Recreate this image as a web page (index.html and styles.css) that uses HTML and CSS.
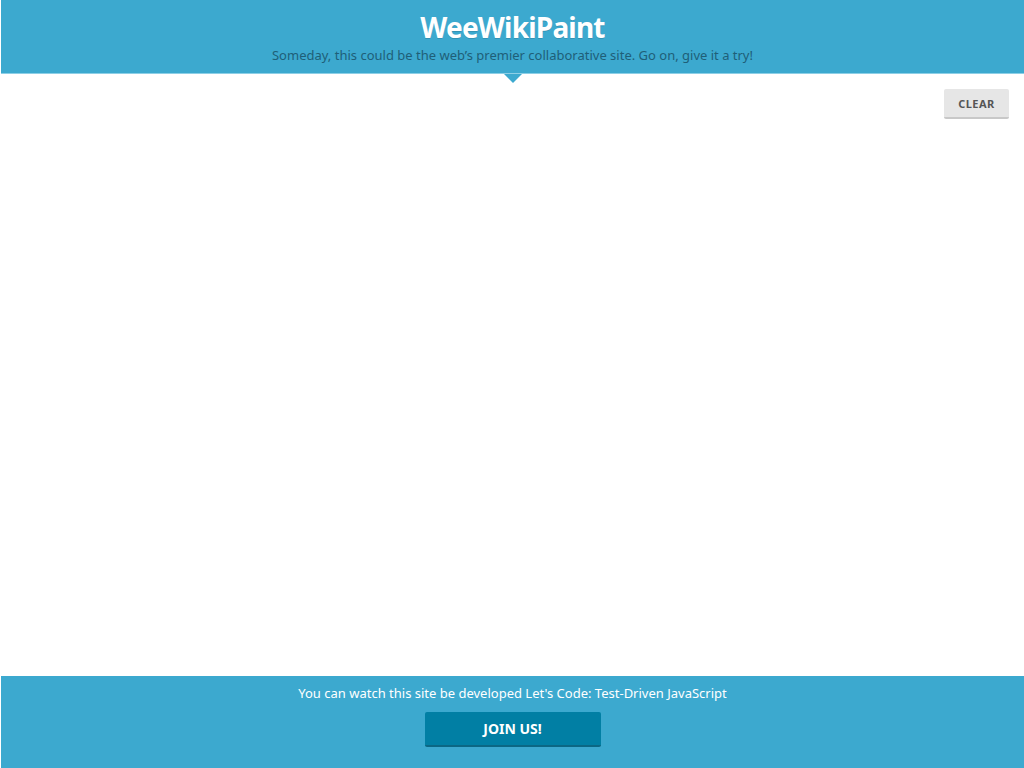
FILE: index.html
```html
<!DOCTYPE html>
<html>
<head>
<meta charset="utf-8">
<title>WeeWikiPaint</title>
<link rel="stylesheet" href="styles.css">
</head>
<body>
<div class="page">
  <header class="masthead">
    <h1 class="title">WeeWikiPaint</h1>
    <p class="tagline">Someday, this could be the web’s premier collaborative site. Go on, give it a try!</p>
    <span class="pointer"></span>
  </header>
  <main class="canvas-area">
    <div class="toolbar">
      <button class="clear-btn">CLEAR</button>
    </div>
  </main>
  <footer class="footer">
    <p class="footer-text">You can watch this site be developed Let's Code: Test-Driven JavaScript</p>
    <button class="join-btn">JOIN US!</button>
  </footer>
</div>
</body>
</html>
```
FILE: styles.css
```css
html, body {
  margin: 0;
  padding: 0;
  height: 100%;
}
body {
  font-family: "Noto Sans", "DejaVu Sans", sans-serif;
  background: #ffffff;
}
.page {
  display: flex;
  flex-direction: column;
  height: 768px;
  padding-left: 1px;
  box-sizing: border-box;
}
.masthead {
  position: relative;
  background: #3ca9cf;
  border-bottom: 1px solid #8dcfe6;
  height: 73px;
  display: flex;
  flex-direction: column;
  align-items: center;
  flex: none;
}
.title {
  margin: 10px 0 0;
  font-size: 28px;
  line-height: 34px;
  font-weight: 700;
  color: #ffffff;
  letter-spacing: -0.8px;
  text-shadow: 0 1px 0 rgba(0,0,0,0.15);
}
.tagline {
  margin: 2px 0 0;
  font-size: 13px;
  line-height: 18px;
  color: #1f5f78;
}
.pointer {
  position: absolute;
  left: 50%;
  bottom: -10px;
  margin-left: -9px;
  width: 0;
  height: 0;
  border-left: 9px solid transparent;
  border-right: 9px solid transparent;
  border-top: 9px solid #3ca9cf;
}
.canvas-area {
  flex: 1;
  background: #ffffff;
}
.toolbar {
  display: flex;
  justify-content: flex-end;
  padding: 15px 15px 0 0;
}
.clear-btn {
  width: 65px;
  height: 30px;
  border: none;
  border-bottom: 2px solid #c8c8c8;
  border-radius: 2px;
  background: #e6e6e6;
  color: #555555;
  font-family: inherit;
  font-size: 11px;
  font-weight: 700;
  letter-spacing: 0.5px;
  padding: 0;
}
.footer {
  flex: none;
  height: 92px;
  background: #3ca9cf;
  display: flex;
  flex-direction: column;
  align-items: center;
}
.footer-text {
  margin: 8px 0 0;
  font-size: 13px;
  line-height: 18px;
  color: #ffffff;
}
.join-btn {
  margin-top: 10px;
  width: 176px;
  height: 35px;
  border: none;
  border-bottom: 2px solid #0b6784;
  border-radius: 2px;
  background: #017fa4;
  color: #ffffff;
  font-family: inherit;
  font-size: 14px;
  font-weight: 700;
  padding: 0;
}
```
